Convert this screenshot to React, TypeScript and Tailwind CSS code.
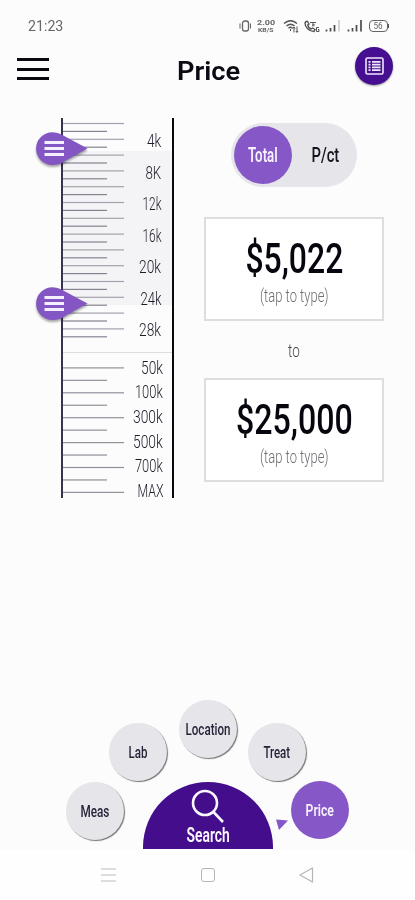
import { useLayoutEffect, useRef, useState } from "react";

// Condensed lettering: squeezes a line of text horizontally to the given width.
function Fit({ text, width, className = "" }: { text: string; width: number; className?: string }) {
  const ref = useRef<HTMLSpanElement>(null);
  const [scale, setScale] = useState(0.7);
  useLayoutEffect(() => {
    if (ref.current) setScale(width / ref.current.offsetWidth);
  }, [text, width]);
  return (
    <span className="flex shrink-0 justify-center whitespace-nowrap" style={{ width }}>
      <span ref={ref} className={`block shrink-0 ${className}`} style={{ transform: `scaleX(${scale})` }}>
        {text}
      </span>
    </span>
  );
}

const upper: [string, number][] = [["4k", 14], ["8K", 16], ["12k", 19], ["16k", 19], ["20k", 22], ["24k", 21], ["28k", 22]];
const lower: [string, number][] = [["50k", 22], ["100k", 28], ["300k", 30], ["500k", 30], ["700k", 28], ["MAX", 26]];

function Handle({ className }: { className: string }) {
  return (
    <svg className={`absolute -left-[29px] h-[38px] w-[56px] drop-shadow-[0_2px_1px_rgba(0,0,0,0.35)] ${className}`} viewBox="0 0 56 38">
      <path d="M18.5 2.2C24 2.2 28 4.5 32 7L53.5 18.5L32 30.5C28 33.5 24 35 18.5 35A16.4 16.4 0 0 1 18.5 2.2Z" fill="#8356c4" />
      <path d="M10.5 12.5H30M10.5 18.5H30M10.5 24.5H30" stroke="#f5eefc" strokeWidth="2.8" />
    </svg>
  );
}

function Ruler() {
  return (
    <div className="relative flex h-[380px] w-[113px] justify-between border-l-2 border-r-2 border-l-[#38334c] border-r-[#08080f]">
      <div className="absolute left-0 top-[33px] h-[154px] w-full bg-[#f4f4f6]" />
      <div className="absolute left-0 top-[234px] h-px w-full bg-[#dedee0]" />
      <svg className="relative h-[380px] w-[62px]" viewBox="0 0 62 380">
        {Array.from({ length: 28 }, (_, i) => (
          <rect key={i} x="0" y={4.9 + i * 7.9} width={i % 2 ? 44 : 61} height="1.2" fill={i % 2 ? "#85838f" : "#a3a1ac"} />
        ))}
        {Array.from({ length: 11 }, (_, i) => (
          <rect key={i} x="0" y={249.3 + i * 12.45} width={i % 2 ? 44 : 61} height="1.2" fill="#929099" />
        ))}
      </svg>
      <div className="relative flex flex-col items-end pt-2 text-[17.5px] font-light text-[#1d1b27]">
        {upper.map(([t, w]) => (
          <div key={t} className="flex h-[31.5px] shrink-0 items-center pr-[11px] leading-none">
            <Fit text={t} width={w} />
          </div>
        ))}
        <div className="h-[9.5px] shrink-0" />
        {lower.map(([t, w]) => (
          <div key={t} className="flex h-[24.7px] shrink-0 items-center pr-[9px] leading-none">
            <Fit text={t} width={w} />
          </div>
        ))}
      </div>
      <Handle className="top-[12px]" />
      <Handle className="top-[167px]" />
    </div>
  );
}

function PriceBox({ value, width }: { value: string; width: number }) {
  return (
    <div className="flex h-[104px] w-[180px] flex-col items-center border-2 border-[#dedee0] bg-white pt-[19px]">
      <Fit text={value} width={width} className="text-[42px] font-medium leading-[42px] text-[#06060e]" />
      <Fit text="(tap to type)" width={69} className="mt-[6px] text-[17.5px] font-light leading-[20px] text-[#6f6f74]" />
    </div>
  );
}

function Signal({ faint }: { faint?: boolean }) {
  return (
    <svg className="h-3 w-4" viewBox="0 0 16 12">
      <path d="M1.5 9.5V11.5M5.5 8V11.5M9.5 5V11.5" stroke="#4a4a4a" strokeWidth="1.7" />
      <path d="M14 0V11.5" stroke={faint ? "#cfcfcf" : "#4a4a4a"} strokeWidth="1.7" />
    </svg>
  );
}

function StatusBar() {
  return (
    <div className="flex h-[51px] items-center justify-between pl-[28px] pr-[26px] pt-px text-[#666]">
      <Fit text="21:23" width={35} className="text-[15px] leading-none" />
      <div className="flex items-center">
        <svg className="h-3 w-3" viewBox="0 0 12 12" fill="none" stroke="#666">
          <rect x="3.5" y="1" width="6" height="10" rx="2.2" strokeWidth="1.3" />
          <path d="M1 3.5V8.5M11.5 3.5V8.5" />
        </svg>
        <div className="ml-[6px] flex w-[18px] flex-col items-center font-bold">
          <Fit text="2.00" width={18} className="text-[7px] leading-[8px]" />
          <Fit text="KB/S" width={15} className="text-[5px] leading-[6px]" />
        </div>
        <svg className="ml-2 h-[13px] w-4" viewBox="0 0 16 13" fill="none" stroke="#555" strokeWidth="1.4">
          <path d="M1 3.5C5 0 10 0 14 3.5M3.5 6C6 3.8 9 3.8 11.5 6M5.5 8.2Q7.5 6.5 9.5 8.2" />
          <path d="M7.5 9V11M11 7V12.5M14 6.5V12.5M9.6 8.6L11 7L12.3 8.6M12.8 11L14 12.3L15.2 11" strokeWidth="1" />
        </svg>
        <svg className="ml-[5px] h-[13px] w-4" viewBox="0 0 16 13" fill="none" stroke="#555" strokeWidth="1.4">
          <path d="M2 1.5L1 3C1 7 5 11.5 10 11.5L11 9.5L8.5 8L7 9C5 8 4 6.5 3.7 5L5 4L3.5 1.5Z" />
          <path d="M6 2.5H12M8 5H11M9 2.5V6.5M15 7.5H12.5V11.5H15V9.5H14" strokeWidth="1" />
        </svg>
        <div className="ml-[5px]"><Signal faint /></div>
        <div className="ml-[6px]"><Signal /></div>
        <div className="ml-[6px] flex h-[12px] w-[19px] items-center justify-center rounded-[4px] border border-[#666] text-[9px] leading-none">
          <Fit text="56" width={9} />
        </div>
        <div className="h-1 w-px bg-[#555]" />
      </div>
    </div>
  );
}

const bubbles = [
  { t: "Meas", w: 29, pos: "left-[66px] top-[82px]" },
  { t: "Lab", w: 19, pos: "left-[109px] top-[23px]" },
  { t: "Location", w: 45, pos: "left-[179px] top-0" },
  { t: "Treat", w: 27, pos: "left-[248px] top-[23px]" },
];

export default function App() {
  return (
    <div className="flex h-[900px] w-[415px] flex-col overflow-hidden bg-[#fcfcfd] font-['Roboto','Liberation_Sans',sans-serif]">
      <StatusBar />
      <header className="flex h-[67px] items-start justify-between pl-[17px] pr-[22px]">
        <div className="mt-[7px] flex w-[32px] flex-col gap-[6.5px]">
          <div className="h-[3px] bg-[#090912]" />
          <div className="h-[3px] bg-[#090912]" />
          <div className="h-[3px] bg-[#090912]" />
        </div>
        <div className="mt-[7px] pl-[13px]">
          <Fit text="Price" width={63} className="text-[25.5px] font-semibold leading-[26px] text-[#0b0b14]" />
        </div>
        <div className="-mt-[4px] flex h-[38px] w-[38px] items-center justify-center rounded-full bg-[#460f91] shadow-[0_1px_2px_rgba(0,0,0,0.4)]">
          <svg className="h-[18px] w-[19px]" viewBox="0 0 19 18" fill="none" stroke="#efe6fb">
            <rect x="1" y="1" width="17" height="16" rx="1.5" strokeWidth="1.6" />
            <path d="M3.5 4.8H5.5M3.5 7.6H5.5M3.5 10.4H5.5M3.5 13.2H5.5M7 4.8H15.5M7 7.6H15.5M7 10.4H15.5M7 13.2H15.5" strokeWidth="1.8" />
          </svg>
        </div>
      </header>
      <main className="flex h-[582px] items-start pl-[61px]">
        <Ruler />
        <div className="ml-[30px] flex w-[180px] flex-col items-center pt-[4.5px]">
          <div className="flex h-[64px] w-[126px] items-center rounded-full bg-[#e6e5e9] pl-[3px]">
            <div className="flex h-[58px] w-[58px] items-center justify-center rounded-full bg-[#8657c7] pr-px pt-[3px]">
              <Fit text="Total" width={30} className="text-[19.5px] font-semibold leading-none text-[#f7f1ff]" />
            </div>
            <div className="ml-[19px] pt-[3px]">
              <Fit text="P/ct" width={28} className="text-[19.5px] font-medium leading-none text-[#15131f]" />
            </div>
          </div>
          <div className="mt-[30.5px]"><PriceBox value="$5,022" width={98} /></div>
          <div className="flex h-[57px] items-center pt-[3px]">
            <Fit text="to" width={12} className="text-[18px] font-light leading-none text-[#45454b]" />
          </div>
          <PriceBox value="$25,000" width={117} />
        </div>
      </main>
      <nav className="relative h-[150px]">
        {bubbles.map((b) => (
          <div key={b.t} className={`absolute flex h-[58px] w-[58px] items-center justify-center rounded-full bg-[#e6e5e9] shadow-[1px_1px_1px_rgba(0,0,0,0.55)] ${b.pos}`}>
            <Fit text={b.t} width={b.w} className="text-[17px] font-medium leading-none text-[#27233a]" />
          </div>
        ))}
        <div className="absolute left-[291px] top-[81px] flex h-[58px] w-[58px] items-center justify-center rounded-full bg-[#8657c7] pt-px">
          <Fit text="Price" width={28} className="text-[17px] font-semibold leading-none text-[#f7f1ff]" />
        </div>
        <svg className="absolute left-[276px] top-[119px] h-[12px] w-[12px]" viewBox="0 0 12 12">
          <path d="M0 .5L12 1.5L3 11Z" fill="#8657c7" />
        </svg>
        <div className="absolute left-[143px] top-[82px] flex h-[67px] w-[130px] flex-col items-center rounded-t-full bg-[#430d8b] pt-[6px]">
          <svg className="h-[36px] w-[34px]" viewBox="0 0 34 36" fill="none" stroke="#fbf7ff" strokeWidth="2.6">
            <circle cx="14" cy="15" r="12" />
            <path d="M22.5 24L32 34" />
          </svg>
          <Fit text="Search" width={43} className="mt-[1px] text-[20px] font-semibold leading-[20px] text-[#fbf7ff]" />
        </div>
      </nav>
      <footer className="flex h-[50px] items-center justify-between bg-[#fefefe] px-[101px]">
        <svg className="h-[16px] w-[15px]" viewBox="0 0 15 16" stroke="#bcbcbc" strokeWidth="1.2">
          <path d="M0 2H15M0 8H15M0 14H15" />
        </svg>
        <div className="h-[14px] w-[14px] rounded-[3px] border border-[#b5b5b5]" />
        <svg className="h-[16px] w-[15px]" viewBox="0 0 15 16" fill="none" stroke="#b5b5b5" strokeWidth="1.2">
          <path d="M13.5 1V15L1 8Z" strokeLinejoin="round" />
        </svg>
      </footer>
    </div>
  );
}
